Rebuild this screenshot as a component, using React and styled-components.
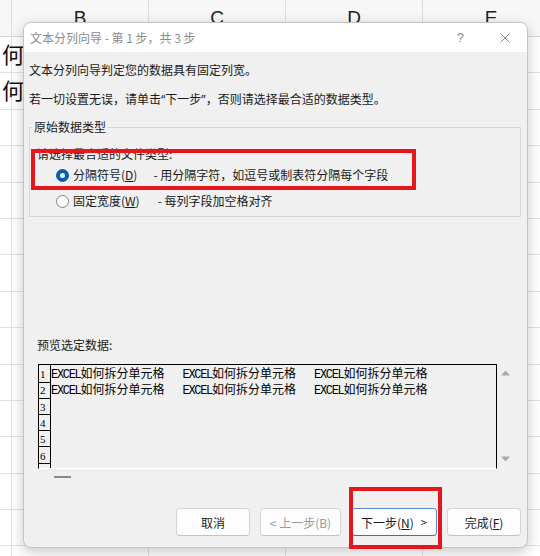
import styled, { createGlobalStyle } from "styled-components";

const GlobalStyle = createGlobalStyle`
  html, body {
    margin: 0;
    padding: 0;
    background: #ffffff;
  }
  * {
    box-sizing: border-box;
  }
`;

const COLUMNS = ["", "B", "C", "D", "E"];
const ROW_COUNT = 15;
const PREVIEW_ROWS = [1, 2, 3, 4, 5, 6, 7];
const SAMPLE = "如何拆分单元格";

function CloseIcon() {
  return (
    <svg width="10" height="10" viewBox="0 0 10 10">
      <path d="M0.5 0.5 L9.5 9.5 M9.5 0.5 L0.5 9.5" stroke="#8a8a8a" strokeWidth="1" fill="none" />
    </svg>
  );
}

function ScrollArrow({ down }) {
  return (
    <svg width="9" height="6" viewBox="0 0 9 6">
      <polygon points={down ? "0,0.5 9,0.5 4.5,5.5" : "0,5.5 9,5.5 4.5,0.5"} fill="#ababab" />
    </svg>
  );
}

function Sample() {
  return (
    <>
      <Latin>EXCEL</Latin>
      {SAMPLE}
    </>
  );
}

function App() {
  return (
    <>
      <GlobalStyle />
      <Page>
        <Sheet>
          {COLUMNS.map((c, i) => (
            <HeaderCell key={"h" + i}>{c}</HeaderCell>
          ))}
          {Array.from({ length: ROW_COUNT }).map((_, r) =>
            COLUMNS.map((c, i) => (
              <Cell key={r + "-" + i}>{i === 0 && r < 2 ? "何" : ""}</Cell>
            ))
          )}
        </Sheet>

        <Dialog>
          <TitleBar>
            <Title>文本分列向导 - 第 1 步，共 3 步</Title>
            <TitleButtons>
              <Help>?</Help>
              <CloseIcon />
            </TitleButtons>
          </TitleBar>

          <Body>
            <Line $top={10}>文本分列向导判定您的数据具有固定列宽。</Line>
            <Line $top={13}>
              若一切设置无误，请单击<Quote>“</Quote>下一步<Quote>”</Quote>，否则请选择最合适的数据类型。
            </Line>

            <Group>
              <Legend>原始数据类型</Legend>
              <Prompt>请选择最合适的文件类型:</Prompt>
              <RadioRow>
                <Radio $checked />
                <RadioLabel>
                  分隔符号(<U>D</U>)
                </RadioLabel>
                <Desc $gap={16}>- 用分隔字符，如逗号或制表符分隔每个字段</Desc>
              </RadioRow>
              <RadioRow>
                <Radio />
                <RadioLabel>
                  固定宽度(<U>W</U>)
                </RadioLabel>
                <Desc $gap={18}>- 每列字段加空格对齐</Desc>
              </RadioRow>
            </Group>

            <PreviewLabel>预览选定数据:</PreviewLabel>
            <PreviewArea>
              <PreviewBox>
                {PREVIEW_ROWS.map((n) => (
                  <PreviewRow key={n}>
                    <NumCell>{n < 7 ? n : ""}</NumCell>
                    {n <= 2 &&
                      [0, 1, 2].map((k) => (
                        <DataCell key={k}>
                          <Sample />
                        </DataCell>
                      ))}
                  </PreviewRow>
                ))}
              </PreviewBox>
              <VScroll>
                <ScrollArrow />
                <ScrollArrow down />
              </VScroll>
            </PreviewArea>
            <HScroll>
              <Thumb />
            </HScroll>

            <Buttons>
              <Button $w={74}>取消</Button>
              <Button $w={81} $disabled>
                &lt; 上一步(B)
              </Button>
              <Button $w={86} $default>
                下一步(<U>N</U>)<Chevron>&gt;</Chevron>
              </Button>
              <Button $w={74}>
                完成(<U>F</U>)
              </Button>
            </Buttons>
          </Body>
        </Dialog>

        <Mark $x={31} $y={149} $w={385} $h={41} />
        <Mark $x={349} $y={487} $w={93} $h={62} />
      </Page>
    </>
  );
}

var Page = styled.div`
    position: relative;
    width: 540px;
    height: 556px;
    overflow: hidden;
    background: #ffffff;
    font-family: "Noto Sans CJK SC", "Noto Sans", sans-serif;
  `,
  Sheet = styled.div`
    display: grid;
    grid-template-columns: 12px repeat(4, 137px);
    grid-template-rows: 37px;
    grid-auto-rows: 36.4px;
    width: 560px;
  `,
  HeaderCell = styled.div`
    display: flex;
    align-items: center;
    justify-content: center;
    background: #f7f7f7;
    border-right: 1px solid #dedede;
    border-bottom: 1px solid #d6d6d6;
    font-family: "Liberation Sans", Arial, sans-serif;
    font-size: 19px;
    color: #222222;
  `,
  Cell = styled.div`
    border-right: 1px solid #e2e2e2;
    border-bottom: 1px solid #e2e2e2;
    padding-left: 2px;
    font-size: 22px;
    line-height: 32px;
    white-space: nowrap;
    overflow: visible;
    color: #111111;
  `,
  Dialog = styled.div`
    position: absolute;
    left: 23px;
    top: 22px;
    width: 505px;
    height: 526px;
    display: flex;
    flex-direction: column;
    background: #f0f0f0;
    border: 1px solid #c4c4c4;
    border-radius: 8px;
    overflow: hidden;
    box-shadow: 0 4px 14px rgba(0, 0, 0, 0.22);
    font-size: 12px;
    color: #1a1a1a;
  `,
  TitleBar = styled.div`
    height: 29px;
    flex: none;
    display: flex;
    align-items: center;
    justify-content: space-between;
    background: #ffffff;
    padding: 0 17px 0 6px;
  `,
  Title = styled.div`
    font-size: 12px;
    color: #8c8c8c;
    line-height: 16px;
  `,
  TitleButtons = styled.div`
    display: flex;
    align-items: center;
    gap: 36px;
  `,
  Help = styled.span`
    font-family: "Liberation Sans", Arial, sans-serif;
    font-size: 13px;
    color: #8c8c8c;
  `,
  Body = styled.div`
    flex: 1;
    display: flex;
    flex-direction: column;
    padding: 0 6px 11px 5px;
  `,
  Line = styled.div`
    margin-top: ${(p) => p.$top}px;
    line-height: 16px;
    white-space: nowrap;
  `,
  Quote = styled.span`
    font-family: "Noto Sans", sans-serif;
  `,
  Group = styled.fieldset`
    margin: 11px 0 0;
    padding: 0 7px 2px;
    border: 1px solid #d7d7d7;
    min-width: 0;
  `,
  Legend = styled.legend`
    margin-left: -5px;
    padding: 0 2px;
    line-height: 16px;
  `,
  Prompt = styled.div`
    margin-top: 11px;
    line-height: 16px;
  `,
  RadioRow = styled.div`
    display: flex;
    align-items: center;
    height: 26px;
    padding-left: 19px;
    white-space: nowrap;
  `,
  Radio = styled.span`
    width: 13px;
    height: 13px;
    flex: none;
    border-radius: 50%;
    margin-right: 4px;
    background: ${(p) => (p.$checked ? "#005fb8" : "#fbfbfb")};
    border: 1px solid ${(p) => (p.$checked ? "#005fb8" : "#858585")};
    display: flex;
    align-items: center;
    justify-content: center;
    &::after {
      content: "";
      display: ${(p) => (p.$checked ? "block" : "none")};
      width: 5px;
      height: 5px;
      border-radius: 50%;
      background: #ffffff;
    }
  `,
  RadioLabel = styled.span`
    line-height: 16px;
  `,
  Desc = styled.span`
    margin-left: ${(p) => p.$gap}px;
    line-height: 16px;
  `,
  U = styled.span`
    text-decoration: underline;
    text-underline-offset: 1px;
  `,
  PreviewLabel = styled.div`
    margin: 120px 0 0 8px;
    line-height: 16px;
  `,
  PreviewArea = styled.div`
    display: flex;
    margin: 11px 0 0 9px;
  `,
  PreviewBox = styled.div`
    width: 459px;
    height: 105px;
    overflow: hidden;
    border: 1px solid #000000;
    border-bottom: 1px solid #ffffff;
  `,
  PreviewRow = styled.div`
    display: grid;
    grid-template-columns: 12px repeat(3, 131.5px);
    height: 16.33px;
    line-height: 16px;
    white-space: nowrap;
  `,
  NumCell = styled.div`
    border-right: 1px solid #000000;
    border-bottom: 1px solid #000000;
    padding: 2px 0 0 1px;
    font-family: "Liberation Serif", "Times New Roman", serif;
    font-size: 11px;
    line-height: 14px;
    color: #000000;
  `,
  DataCell = styled.div`
    font-size: 12px;
    line-height: 16px;
    color: #000000;
  `,
  Latin = styled.span`
    font-family: "Liberation Mono", "Courier New", monospace;
    font-size: 12px;
    letter-spacing: -1.3px;
  `,
  VScroll = styled.div`
    width: 17px;
    display: flex;
    flex-direction: column;
    align-items: center;
    justify-content: space-between;
    padding: 6px 0 7px;
  `,
  HScroll = styled.div`
    margin: 7px 0 0 25px;
    height: 2px;
  `,
  Thumb = styled.div`
    width: 17px;
    height: 2px;
    background: #8a8a8a;
  `,
  Buttons = styled.div`
    margin-top: auto;
    display: flex;
    justify-content: flex-end;
    gap: 10px;
  `,
  Button = styled.div`
    width: ${(p) => p.$w}px;
    height: 28px;
    display: flex;
    align-items: center;
    justify-content: center;
    background: #fdfdfd;
    border: 1px solid ${(p) => (p.$default ? "#4f8fd0" : "#d4d4d4")};
    border-bottom-color: ${(p) => (p.$default ? "#2f74c0" : "#c2c2c2")};
    border-radius: 4px;
    font-size: 12px;
    color: ${(p) => (p.$disabled ? "#9a9a9a" : "#1a1a1a")};
    white-space: nowrap;
  `,
  Chevron = styled.span`
    margin-left: 7px;
    font-size: 11px;
  `,
  Mark = styled.div`
    position: absolute;
    left: ${(p) => p.$x}px;
    top: ${(p) => p.$y}px;
    width: ${(p) => p.$w}px;
    height: ${(p) => p.$h}px;
    border: 4px solid #e5161d;
    pointer-events: none;
  `;

export default App;
